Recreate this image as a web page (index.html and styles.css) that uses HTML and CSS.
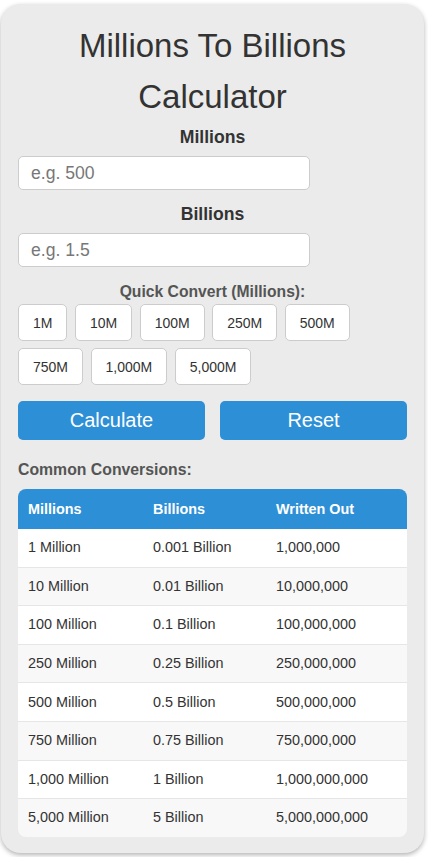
FILE: index.html
```html
<!DOCTYPE html>
<html lang="en">
<head>
  <meta charset="UTF-8">
  <meta name="viewport" content="width=device-width, initial-scale=1.0">
  <title>Millions To Billions Calculator</title>
  <link rel="stylesheet" href="styles.css">
</head>
<body>

  <div class="calculator">
    <h1>Millions To Billions Calculator</h1>

    <!-- Campi di input -->
    <label class="field-label" for="millions">Millions</label>
    <input class="field-input" type="number" id="millions" placeholder="e.g. 500">

    <label class="field-label billions-label" for="billions">Billions</label>
    <input class="field-input" type="number" id="billions" placeholder="e.g. 1.5">

    <!-- Conversione rapida -->
    <p class="quick-title">Quick Convert (Millions):</p>
    <div class="quick-buttons">
      <button class="quick-btn" data-value="1">1M</button>
      <button class="quick-btn" data-value="10">10M</button>
      <button class="quick-btn" data-value="100">100M</button>
      <button class="quick-btn" data-value="250">250M</button>
      <button class="quick-btn" data-value="500">500M</button>
      <button class="quick-btn" data-value="750">750M</button>
      <button class="quick-btn" data-value="1000">1,000M</button>
      <button class="quick-btn" data-value="5000">5,000M</button>
    </div>

    <div class="actions">
      <button class="action-btn" id="calculate">Calculate</button>
      <button class="action-btn" id="reset">Reset</button>
    </div>

    <!-- Tabella conversioni -->
    <h3 class="table-title">Common Conversions:</h3>
    <div class="table-wrap">
      <table class="conversions">
        <thead>
          <tr><th class="col-m">Millions</th><th class="col-b">Billions</th><th>Written Out</th></tr>
        </thead>
        <tbody>
          <tr><td>1 Million</td><td>0.001 Billion</td><td>1,000,000</td></tr>
          <tr><td>10 Million</td><td>0.01 Billion</td><td>10,000,000</td></tr>
          <tr><td>100 Million</td><td>0.1 Billion</td><td>100,000,000</td></tr>
          <tr><td>250 Million</td><td>0.25 Billion</td><td>250,000,000</td></tr>
          <tr><td>500 Million</td><td>0.5 Billion</td><td>500,000,000</td></tr>
          <tr><td>750 Million</td><td>0.75 Billion</td><td>750,000,000</td></tr>
          <tr><td>1,000 Million</td><td>1 Billion</td><td>1,000,000,000</td></tr>
          <tr><td>5,000 Million</td><td>5 Billion</td><td>5,000,000,000</td></tr>
        </tbody>
      </table>
    </div>
  </div>

  <script>
    const millionsInput = document.getElementById('millions');
    const billionsInput = document.getElementById('billions');

    document.querySelectorAll('.quick-btn').forEach(btn => {
      btn.addEventListener('click', () => {
        millionsInput.value = btn.getAttribute('data-value');
        calculate();
      });
    });

    function calculate() {
      if (millionsInput.value !== '') {
        billionsInput.value = parseFloat(millionsInput.value) / 1000;
      } else if (billionsInput.value !== '') {
        millionsInput.value = parseFloat(billionsInput.value) * 1000;
      }
    }

    document.getElementById('calculate').addEventListener('click', calculate);
    document.getElementById('reset').addEventListener('click', () => {
      millionsInput.value = '';
      billionsInput.value = '';
    });
  </script>

</body>
</html>
```

FILE: styles.css
```css
body {
  margin: 0;
  background-color: #fff;
  font-family: 'Liberation Sans', Arial, sans-serif;
  color: #333;
}

.calculator {
  margin: 4px 4px 5px 1px;
  padding: 16px 17px 16px;
  background-color: #eaebea;
  border-radius: 20px;
  box-shadow: 0 2px 5px rgba(0, 0, 0, 0.3);
}

h1 {
  margin: 0;
  font-size: 33px;
  font-weight: normal;
  line-height: 51px;
  text-align: center;
  color: #333;
}

.field-label {
  display: block;
  margin: 5px 0 9px;
  font-size: 17.6px;
  font-weight: bold;
  line-height: 20px;
  text-align: center;
  color: #333;
}

.billions-label {
  margin-top: 14px;
}

.field-input {
  display: block;
  box-sizing: border-box;
  width: 292px;
  height: 34px;
  padding: 6px 12px;
  border: 1px solid #ccc;
  border-radius: 5px;
  background-color: #fff;
  font-family: inherit;
  font-size: 17.6px;
  color: #333;
}

.field-input::placeholder {
  color: #777;
}

.quick-title {
  margin: 15.5px 0 3.5px;
  font-size: 15.7px;
  font-weight: bold;
  line-height: 18px;
  text-align: center;
  color: #555;
}

.quick-buttons {
  display: flex;
  flex-wrap: wrap;
  gap: 7px 7.5px;
}

.quick-btn {
  height: 37px;
  padding: 0 14px;
  border: 1px solid #ccc;
  border-radius: 5px;
  background-color: #fff;
  font-family: inherit;
  font-size: 14px;
  color: #333;
  cursor: pointer;
}

.actions {
  display: flex;
  gap: 15px;
  margin-top: 16px;
}

.action-btn {
  flex: 1;
  height: 39px;
  border: none;
  border-radius: 5px;
  background-color: #2d8fd6;
  font-family: inherit;
  font-size: 20px;
  color: #fff;
  cursor: pointer;
}

.table-title {
  margin: 20.5px 0 10.5px;
  font-size: 15.8px;
  font-weight: bold;
  line-height: 18px;
  color: #555;
}

/* Tabella con angoli arrotondati */
.table-wrap {
  border-radius: 8px;
  overflow: hidden;
}

.conversions {
  width: 100%;
  border-collapse: collapse;
  table-layout: fixed;
  font-size: 14.4px;
}

.conversions th {
  padding: 12px 10px;
  line-height: 16px;
  background-color: #2d8fd6;
  color: #fff;
  font-weight: bold;
  text-align: left;
}

.col-m {
  width: 105px;
}

.col-b {
  width: 103px;
}

.conversions td {
  padding: 10.3px 10px;
  line-height: 17px;
  border-bottom: 1px solid #e6e6e6;
  background-color: #fff;
  color: #333;
  white-space: nowrap;
}

.conversions tbody tr:nth-child(even) td {
  background-color: #f8f8f8;
}

.conversions tbody tr:last-child td {
  border-bottom: none;
}
```
